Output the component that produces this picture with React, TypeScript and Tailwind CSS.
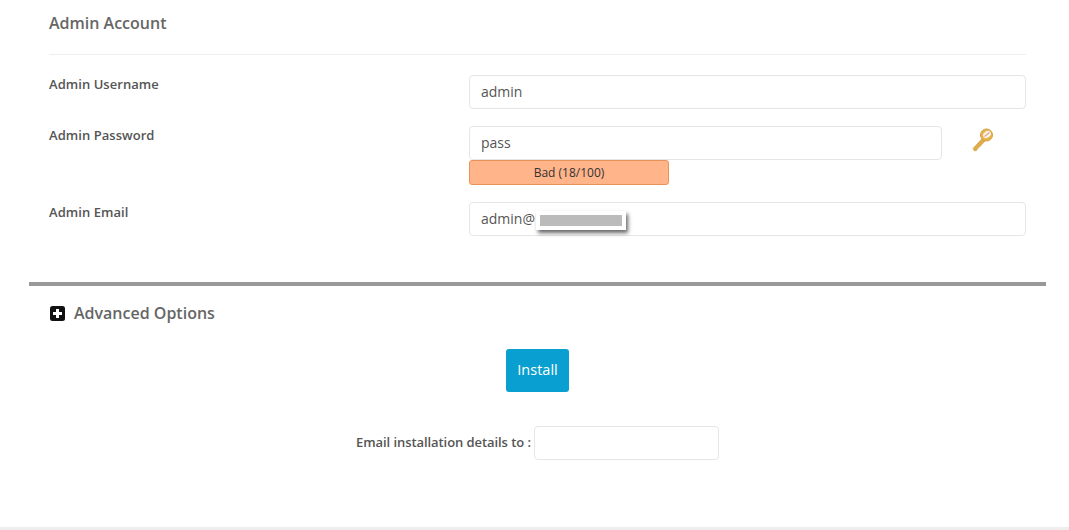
import React from "react";

const inputCls = "h-[34px] rounded-[4px] border border-[#e6e6e6] bg-white pl-[11px] pr-3 pb-[2px] text-[14px] text-[#555] outline-none";
const labelCls = "w-[420px] shrink-0 text-[13px] font-semibold tracking-[0.05px] text-[#555]";

const KeyIcon = () => (
    <svg width="24" height="26" viewBox="0 0 24 26">
        <path d="M13.5 10 L3 21.5 L4.5 24 L6.5 23.5 L8 21 L9.5 20 L16 13" fill="#e0ab4a" stroke="#cf9a3a" strokeWidth="0.6" />
        <circle cx="16.5" cy="8" r="6" fill="#e6b54f" stroke="#d6a03a" strokeWidth="1" />
        <ellipse cx="17" cy="7.5" rx="4.2" ry="3.2" fill="#fdf3ea" transform="rotate(-35 17 7.5)" />
        <path d="M14.5 9.5 L19.5 5.5" stroke="#e3a795" strokeWidth="1.4" />
    </svg>
);

const PlusBox = () => (
    <svg width="15" height="15" viewBox="0 0 15 15">
        <rect width="15" height="15" rx="2.5" fill="#111" />
        <path d="M6 3h3v3h3v3H9v3H6V9H3V6h3z" fill="#fff" />
    </svg>
);

export default function App() {
    return (
        <div className="flex h-[530px] w-[1069px] flex-col overflow-hidden bg-white font-['Open_Sans',sans-serif]">
            <div className="ml-[49px] mr-[43px]">
                <h2 className="flex h-[55px] items-start border-b border-[#eeeeee] pt-[12px] text-[16px] font-semibold leading-[22px] text-[#666]">
                    Admin Account
                </h2>

                <div className="mt-[20px] flex h-[34px]">
                    <div className={`${labelCls} leading-[18px]`}>Admin Username</div>
                    <input className={`${inputCls} w-[557px]`} defaultValue="admin" />
                </div>

                <div className="mt-[17px] flex">
                    <div className={`${labelCls} leading-[18px]`}>Admin Password</div>
                    <div className="flex flex-col">
                        <div className="flex">
                            <input className={`${inputCls} w-[473px]`} defaultValue="pass" />
                            <div className="ml-[28px] mt-px">
                                <KeyIcon />
                            </div>
                        </div>
                        <div className="flex h-[25px] w-[200px] items-center justify-center rounded-[3px] border border-[#e8935a] bg-[#ffb48a] text-[12px] text-[#333]">
                            Bad (18/100)
                        </div>
                    </div>
                </div>

                <div className="mt-[17px] flex">
                    <div className={`${labelCls} pt-px leading-[18px]`}>Admin Email</div>
                    <div className="relative">
                        <input className={`${inputCls} w-[557px]`} defaultValue="admin@" />
                        <div className="absolute left-[67px] top-[9px] h-[19px] w-[90px] border-[4px] border-white bg-[#bbbbbb] shadow-[2px_3px_4px_rgba(0,0,0,0.6)]" />
                    </div>
                </div>
            </div>

            <div className="ml-[29px] mr-[23px] mt-[46px] h-[4px] bg-[#999999]" />

            <div className="ml-[50px] mt-[16px] flex h-[22px] items-center gap-[9px]">
                <PlusBox />
                <span className="text-[16px] font-semibold leading-[22px] text-[#666]">Advanced Options</span>
            </div>

            <div className="mt-[25px] flex justify-center pl-[6px]">
                <button className="h-[43px] w-[63px] rounded-[3px] bg-[#0a9fd1] pb-[2px] text-[14.5px] text-white">Install</button>
            </div>

            <div className="ml-[356px] mt-[34px] flex h-[34px] items-center">
                <span className="w-[178px] shrink-0 text-[13px] font-semibold tracking-[-0.07px] text-[#555]">Email installation details to :</span>
                <input className={`${inputCls} w-[185px]`} />
            </div>

            <div className="mt-auto h-[3px] bg-[#eeeeee]" />
        </div>
    );
}
